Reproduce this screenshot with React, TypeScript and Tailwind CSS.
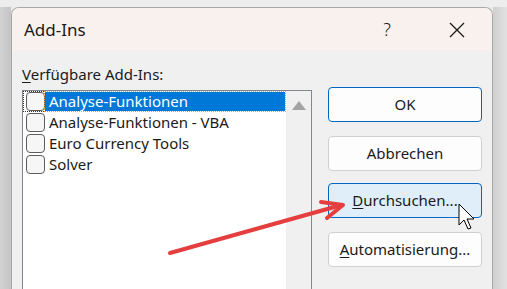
const font = { fontFamily: '"Segoe UI", "Noto Sans", "Open Sans", sans-serif' }

const items = ["Analyse-Funktionen", "Analyse-Funktionen - VBA", "Euro Currency Tools", "Solver"]

function Checkbox() {
  return <div className="h-[19px] w-[19px] shrink-0 rounded-[4px] border border-[#5c5c5c] bg-[#f6f6f6]" />
}

function Btn({ children, variant = "plain", className = "" }: { children: React.ReactNode; variant?: "default" | "plain" | "hover"; className?: string }) {
  const look =
    variant === "default"
      ? "border-[#0067c0] bg-[#fdfdfd]"
      : variant === "hover"
        ? "border-[#0067c0] bg-[#e0eef9]"
        : "border-[#d0d0d0] bg-[#fdfdfd]"
  return (
    <div className={`flex h-[35px] w-[154px] items-center justify-center rounded-[4px] border text-[15px] text-[#1a1a1a] ${look} ${className}`}>
      {children}
    </div>
  )
}

export default function App() {
  return (
    <div className="relative h-[289px] w-[507px] overflow-hidden bg-[#ececec]" style={font}>
      <div className="h-[7px] bg-[#ededed]" />
      <div className="flex h-[282px]">
        <div className="w-[11px] bg-gradient-to-r from-[#d2d2d2] to-[#c4c4c4]" />
        <div className="flex w-[482px] flex-col overflow-hidden rounded-t-[8px] border border-b-0 border-[#a8a8a8] bg-[#f0f0f0]">
          <div className="flex h-[43px] shrink-0 items-center bg-[#f9f1ed] pl-[12px] text-[#1a1a1a]">
            <span className="text-[17px]">Add-Ins</span>
            <span className="ml-auto mr-[58px] text-[18px] font-light">?</span>
            <svg width="16" height="16" viewBox="0 0 16 16" className="mr-[27px]">
              <path d="M1 1 L15 15 M15 1 L1 15" stroke="#1a1a1a" strokeWidth="1.3" />
            </svg>
          </div>
          <div className="flex flex-1 pl-[10px]">
            <div className="flex w-[290px] flex-col pt-[13px]">
              <div className="h-[20px] text-[15px] leading-[20px] text-[#1a1a1a]">
                <span className="underline underline-offset-2">V</span>erfügbare Add-Ins:
              </div>
              <div className="mt-[6px] flex flex-1 border border-b-0 border-[#828790] bg-white">
                <div className="flex flex-1 flex-col">
                  {items.map((t, i) => (
                    <div
                      key={t}
                      className={`flex h-[21px] items-center pl-[2px] ${i === 0 ? "border border-dotted border-[#333]" : "border border-transparent"}`}
                    >
                      <Checkbox />
                      <span
                        className={`flex h-[19px] flex-1 items-center pl-[4px] text-[15px] ${i === 0 ? "bg-[#0078d7] text-white outline-1 outline-dotted outline-[#f0a030]" : "text-[#1a1a1a]"}`}
                      >
                        {t}
                      </span>
                    </div>
                  ))}
                </div>
                <div className="flex w-[25px] justify-center bg-[#f0f0f0] pt-[10px]">
                  <svg width="14" height="9" viewBox="0 0 14 9">
                    <path d="M7 0 L14 9 L0 9 Z" fill="#a3a3a3" />
                  </svg>
                </div>
              </div>
            </div>
            <div className="ml-[16px] flex flex-col pt-[36px]">
              <Btn variant="default">OK</Btn>
              <Btn className="mt-[14px]">Abbrechen</Btn>
              <Btn variant="hover" className="mt-[12px]">
                <span className="underline underline-offset-2">D</span>urchsuchen...
              </Btn>
              <Btn className="mt-[14px]">
                <span className="underline underline-offset-2">A</span>utomatisierung...
              </Btn>
            </div>
          </div>
        </div>
        <div className="flex-1 bg-gradient-to-r from-[#cfcfcf] to-[#e2e2e2]" />
      </div>
      <svg className="absolute left-0 top-0" width="507" height="289" viewBox="0 0 507 289">
        <line x1="170" y1="253" x2="338" y2="206" stroke="#e53e3e" strokeWidth="4" strokeLinecap="round" />
        <path d="M321 202 L343 205 L327 218" fill="none" stroke="#e53e3e" strokeWidth="4" strokeLinecap="round" strokeLinejoin="round" />
        <path
          d="M459 204 L459 225 L464 220 L468 229 L471 228 L467 219 L474 219 Z"
          fill="#fff"
          stroke="#000"
          strokeWidth="1"
          strokeLinejoin="round"
        />
      </svg>
    </div>
  )
}
